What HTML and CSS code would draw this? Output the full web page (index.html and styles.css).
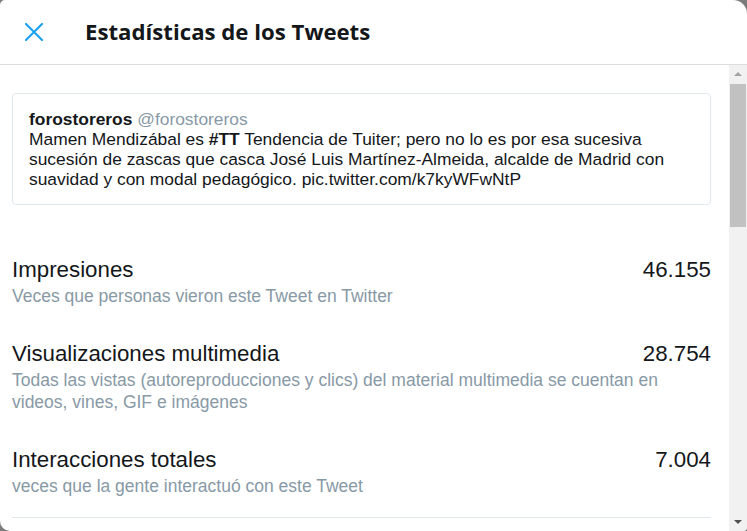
FILE: index.html
```html
<!DOCTYPE html>
<html lang="es">
<head>
<meta charset="utf-8">
<title>Estadísticas de los Tweets</title>
<link rel="stylesheet" href="styles.css">
</head>
<body>
<div class="modal">
  <header class="modal-header">
    <button class="close" aria-label="Cerrar">
      <svg width="20" height="20" viewBox="0 0 20 20"><path d="M2 2 L18 18 M18 2 L2 18" stroke="#1da1f2" stroke-width="2.2" stroke-linecap="round" fill="none"/></svg>
    </button>
    <h1 class="title">Estadísticas de los Tweets</h1>
  </header>
  <div class="modal-body">
    <div class="content">
      <div class="tweet">
        <div class="tweet-head"><span class="name">forostoreros</span> <span class="handle">@forostoreros</span></div>
        <p class="tweet-text">Mamen Mendizábal es <b>#TT</b> Tendencia de Tuiter; pero no lo es por esa sucesiva sucesión de zascas que casca José Luis Martínez-Almeida, alcalde de Madrid con suavidad y con modal pedagógico. pic.twitter.com/k7kyWFwNtP</p>
      </div>
      <div class="stats">
        <div class="stat">
          <div class="stat-row"><span class="stat-name">Impresiones</span><span class="stat-value">46.155</span></div>
          <div class="stat-desc">Veces que personas vieron este Tweet en Twitter</div>
        </div>
        <div class="stat">
          <div class="stat-row"><span class="stat-name">Visualizaciones multimedia</span><span class="stat-value">28.754</span></div>
          <div class="stat-desc">Todas las vistas (autoreproducciones y clics) del material multimedia se cuentan en videos, vines, GIF e imágenes</div>
        </div>
        <div class="stat last">
          <div class="stat-row"><span class="stat-name">Interacciones totales</span><span class="stat-value">7.004</span></div>
          <div class="stat-desc">veces que la gente interactuó con este Tweet</div>
        </div>
      </div>
    </div>
    <div class="scrollbar">
      <div class="arrow up"></div>
      <div class="thumb"></div>
      <div class="track-fill"></div>
      <div class="arrow down"></div>
    </div>
  </div>
</div>
</body>
</html>
```

FILE: styles.css
```css
html, body {
  margin: 0;
  padding: 0;
  height: 100%;
}
body {
  background: #7b7b7b;
  font-family: "Liberation Sans", Arial, sans-serif;
  color: #14171a;
  overflow: hidden;
}
.modal {
  width: 747px;
  height: 531px;
  background: #fff;
  border-radius: 5px 14px 4px 10px;
  overflow: hidden;
  display: flex;
  flex-direction: column;
}
.modal-header {
  height: 64px;
  flex: none;
  display: flex;
  align-items: center;
  border-bottom: 1px solid #dcdcdc;
  box-sizing: content-box;
}
.close {
  background: none;
  border: 0;
  padding: 0;
  margin: 0 0 0 24px;
  width: 20px;
  height: 20px;
  display: flex;
}
.title {
  margin: 0 0 0 41px;
  font-family: "Open Sans", "Liberation Sans", sans-serif;
  font-weight: 700;
  font-size: 22.2px;
  line-height: 28px;
  color: #14171a;
}
.modal-body {
  flex: 1;
  display: flex;
  min-height: 0;
}
.content {
  flex: 1;
  padding: 28px 18px 0 12px;
}
.tweet {
  border: 1px solid #e1e8ed;
  border-radius: 4px;
  padding: 15px 16px 15px 16px;
}
.tweet-head {
  font-size: 17.4px;
  line-height: 20px;
}
.name {
  font-weight: 700;
}
.handle {
  color: #8899a6;
}
.tweet-text {
  margin: 0;
  font-size: 17.4px;
  line-height: 20px;
}
.stats {
  padding-top: 35px;
}
.stat {
  padding: 15px 0 16px;
}
.stat + .stat {
  padding-top: 16px;
}
.stat.last {
  border-bottom: 1px solid #e1e8ed;
  padding-bottom: 20px;
}
.stat-row {
  display: flex;
  justify-content: space-between;
  font-size: 22.3px;
  line-height: 30px;
}
.stat-desc {
  color: #8899a6;
  font-size: 17.5px;
  line-height: 22px;
}
.scrollbar {
  width: 18px;
  flex: none;
  background: #f1f1f1;
  display: flex;
  flex-direction: column;
  align-items: center;
}
.arrow {
  width: 0;
  height: 0;
  border-left: 4px solid transparent;
  border-right: 4px solid transparent;
}
.arrow.up {
  margin-top: 7px;
  border-bottom: 4px solid #a3a3a3;
}
.arrow.down {
  margin-bottom: 7px;
  border-top: 4px solid #505050;
}
.thumb {
  margin-top: 8px;
  width: 16px;
  height: 143px;
  background: #c1c1c1;
}
.track-fill {
  flex: 1;
}
```
